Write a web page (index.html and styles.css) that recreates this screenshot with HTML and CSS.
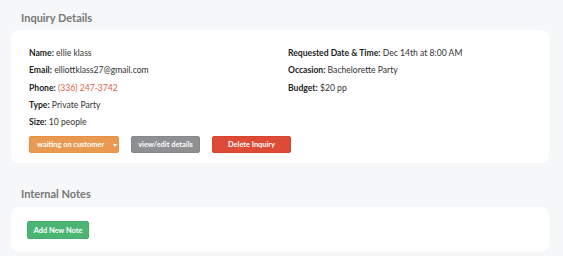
FILE: index.html
```html
<!DOCTYPE html>
<html lang="en">
<head>
  <meta charset="UTF-8" />
  <title>Inquiry Details</title>
  <link rel="stylesheet" href="styles.css">
</head>
<body>
  <h2 class="section-title">Inquiry Details</h2>
  <div class="card details">
    <div class="info">
      <div class="col">
        <p><strong>Name:</strong> ellie klass</p>
        <p><strong>Email:</strong> elliottklass27@gmail.com</p>
        <p><strong>Phone:</strong> <a class="phone" href="#">(336) 247-3742</a></p>
        <p><strong>Type:</strong> Private Party</p>
        <p><strong>Size:</strong> 10 people</p>
      </div>
      <div class="col">
        <p><strong>Requested Date &amp; Time:</strong> Dec 14th at 8:00 AM</p>
        <p><strong>Occasion:</strong> Bachelorette Party</p>
        <p><strong>Budget:</strong> $20 pp</p>
      </div>
    </div>
    <div class="actions">
      <button class="btn btn-orange">waiting on customer <span class="caret"></span></button>
      <button class="btn btn-gray">view/edit details</button>
      <button class="btn btn-red">Delete Inquiry</button>
    </div>
  </div>

  <h2 class="section-title notes-title">Internal Notes</h2>
  <div class="card notes">
    <button class="btn btn-green">Add New Note</button>
  </div>
</body>
</html>
```

FILE: styles.css
```css
body {
  margin: 0;
  padding: 10px 14px 0 11px;
  background: #f6f7f9;
  font-family: Lato, 'Open Sans', sans-serif;
  color: #333;
}
.section-title {
  margin: 0 0 5px 10px;
  font-size: 11px;
  line-height: 15px;
  font-weight: bold;
  color: #777;
}
.notes-title {
  margin-top: 23px;
  margin-bottom: 6px;
}
.card {
  background: #fff;
  border-radius: 8px;
}
.details {
  padding: 15px 18px 10px;
}
.info {
  display: grid;
  grid-template-columns: 259px 1fr;
}
.info p {
  margin: 0;
  font-size: 8.6px;
  line-height: 17.3px;
}
.info strong {
  font-weight: bold;
  color: #222;
}
.phone {
  color: #e0603f;
  text-decoration: none;
}
.actions {
  display: flex;
  gap: 12px;
  margin-top: 5px;
}
.btn {
  border: 1px solid transparent;
  border-radius: 2px;
  color: #fff;
  font-family: Lato, sans-serif;
  font-size: 7.4px;
  font-weight: bold;
  height: 17px;
  padding: 0;
  white-space: nowrap;
  cursor: pointer;
}
.btn-orange {
  background: #e99950;
  border-color: #e49046;
  width: 90px;
  text-align: left;
  padding-left: 7px;
}
.caret {
  display: inline-block;
  margin-left: 7px;
  width: 0;
  height: 0;
  border-left: 2.5px solid transparent;
  border-right: 2.5px solid transparent;
  border-top: 3px solid #fff;
  vertical-align: middle;
}
.btn-gray {
  background: #8e8f91;
  border-color: #87888a;
  width: 69px;
}
.btn-red {
  background: #dd4a35;
  border-color: #d6432e;
  width: 79px;
}
.notes {
  display: flex;
  padding: 14px 16px 13px;
}
.btn-green {
  background: #4cb574;
  border-color: #45ad6c;
  width: 62px;
  height: 18px;
}
```
